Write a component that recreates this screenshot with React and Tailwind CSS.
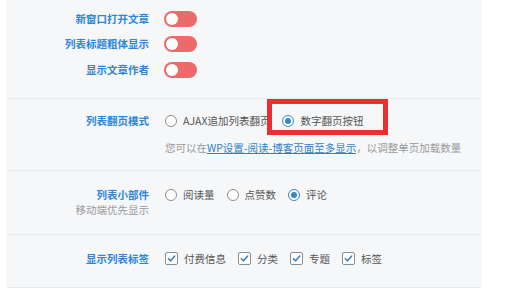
import React from "react";

const font = { fontFamily: '"Noto Sans CJK SC", "Noto Sans", sans-serif' };

function Toggle() {
  return (
    <div className="relative h-[16px] w-[33px] rounded-full bg-[#ec6a6a]">
      <div className="absolute left-[2px] top-[2px] h-[12px] w-[12px] rounded-full bg-white" />
    </div>
  );
}

function Radio({ checked }) {
  return (
    <span
      className={
        "flex h-[12px] w-[12px] shrink-0 items-center justify-center rounded-full border bg-white " +
        (checked ? "border-[#3a85c8]" : "border-[#8d8d8d]")
      }
    >
      {checked && <span className="h-[6px] w-[6px] rounded-full bg-[#3a85c8]" />}
    </span>
  );
}

function Check() {
  return (
    <span className="flex h-[13px] w-[13px] shrink-0 items-center justify-center rounded-[2px] border border-[#8d8d8d] bg-white">
      <svg width="9" height="9" viewBox="0 0 10 10" fill="none">
        <path d="M1.5 5.2 L4 7.6 L8.6 2.2" stroke="#3a80c2" strokeWidth="1.7" strokeLinecap="round" strokeLinejoin="round" />
      </svg>
    </span>
  );
}

function Opt({ children, checked, box }) {
  return (
    <div className="flex items-center gap-[6px]">
      {box ? <Check /> : <Radio checked={checked} />}
      <span className="text-[10.5px] leading-[20px] text-[#555]">{children}</span>
    </div>
  );
}

function Label({ children }) {
  return (
    <div className="w-[143px] shrink-0 text-right text-[10.5px] font-bold leading-[20px] text-[#2f86d4]">
      {children}
    </div>
  );
}

function Divider() {
  return <div className="mx-[2px] h-px bg-[#e8ebee]" />;
}

export default function App() {
  return (
    <div className="relative h-[288px] w-[511px] overflow-hidden bg-white" style={font}>
      <div className="ml-[6px] h-[300px] w-[476px] bg-[#f5f7f9]">
        {/* toggles */}
        <div className="flex flex-col pb-[15px] pt-[6px]">
          {["新窗口打开文章", "列表标题粗体显示", "显示文章作者"].map((t) => (
            <div key={t} className="flex h-[25.5px] items-center gap-[15px]">
              <Label>{t}</Label>
              <Toggle />
            </div>
          ))}
        </div>
        <Divider />
        {/* pagination */}
        <div className="flex gap-[16px] pb-[14px] pt-[12px]">
          <Label>列表翻页模式</Label>
          <div className="flex flex-col">
            <div className="flex items-center gap-[12px]">
              <Opt>AJAX追加列表翻页</Opt>
              <Opt checked>数字翻页按钮</Opt>
            </div>
            <div className="mt-[9px] text-[10.5px] leading-[16px] text-[#9a9a9a]">
              您可以在
              <span className="text-[#2f7fc7] underline decoration-[#2f7fc7]">WP设置-阅读-博客页面至多显示</span>
              ，以调整单页加载数量
            </div>
          </div>
        </div>
        <Divider />
        {/* widgets */}
        <div className="flex gap-[16px] pb-[17px] pt-[14px]">
          <div className="flex w-[143px] shrink-0 flex-col items-end">
            <div className="text-[10.5px] font-bold leading-[20px] text-[#2f86d4]">列表小部件</div>
            <div className="-mt-[2px] text-[10.5px] leading-[14px] text-[#9a9a9a]">移动端优先显示</div>
          </div>
          <div className="flex h-[20px] items-center gap-[12px]">
            <Opt>阅读量</Opt>
            <Opt>点赞数</Opt>
            <Opt checked>评论</Opt>
          </div>
        </div>
        <Divider />
        {/* tags */}
        <div className="flex gap-[16px] pb-[18px] pt-[14px]">
          <Label>显示列表标签</Label>
          <div className="flex h-[20px] items-center gap-[12px]">
            <Opt box>付费信息</Opt>
            <Opt box>分类</Opt>
            <Opt box>专题</Opt>
            <Opt box>标签</Opt>
          </div>
        </div>
        <Divider />
      </div>
      {/* annotation box */}
      <div className="absolute left-[267px] top-[99px] h-[36px] w-[121px] border-[5px] border-[#e8302e]" />
    </div>
  );
}
